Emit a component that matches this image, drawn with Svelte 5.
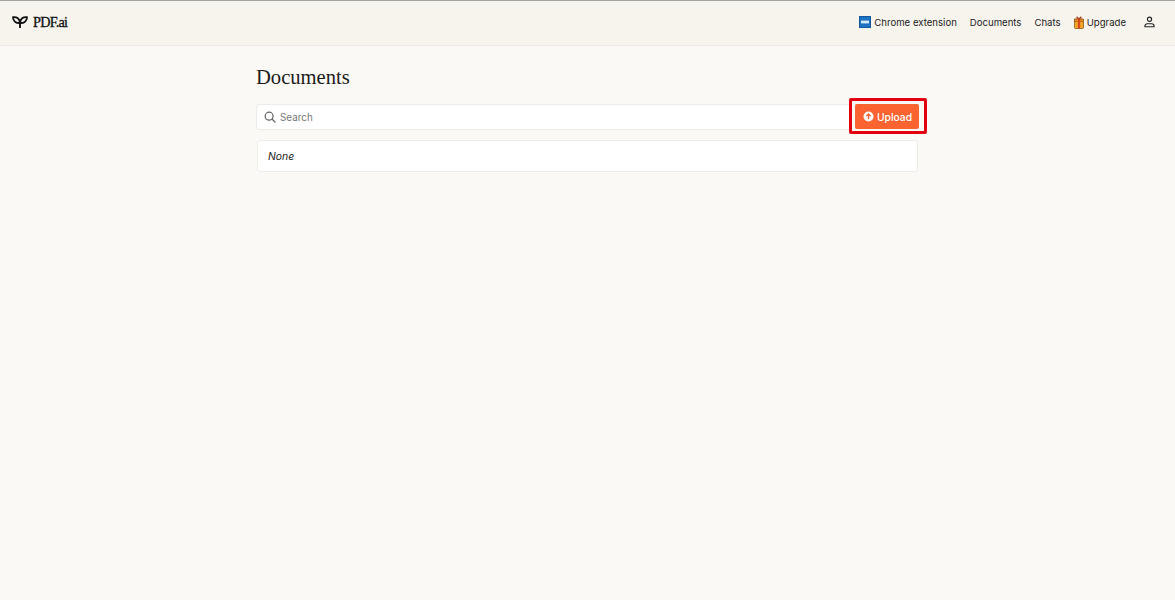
<script>
  const links = ['Documents', 'Chats'];
</script>

<div class="page">
  <header class="top">
    <a class="brand" href="#home">
      <svg class="sprout" viewBox="0 0 16 12" width="16" height="12" fill="none" stroke="#111" stroke-width="1.9" stroke-linecap="round" stroke-linejoin="round">
        <path d="M8 11.2V6.5" />
        <path d="M8 7C4.6 7.4 1.2 5.6 1 1.2 4.8.6 7.8 2.6 8 7Z" />
        <path d="M8 7C11.4 7.4 14.8 5.6 15 1.2 11.2.6 8.2 2.6 8 7Z" />
      </svg>
      <span>PDF.ai</span>
    </a>
    <nav class="nav">
      <a href="#ext" class="ext">
        <svg viewBox="0 0 12 12" width="12" height="12"><rect width="12" height="12" fill="#1d72c4"/><rect x=".5" y=".5" width="11" height="11" fill="none" stroke="#155a9e"/><rect x="2" y="4.6" width="8" height="2.8" fill="#d5e9f8"/></svg>
        Chrome extension
      </a>
      {#each links as l}
        <a href="#{l}">{l}</a>
      {/each}
      <a href="#up" class="ext">
        <svg viewBox="0 0 10 13" width="10" height="13"><rect x=".5" y="3" width="9" height="9.5" rx="1" fill="#f5a623" stroke="#7a4a14" stroke-width=".7"/><rect x=".5" y="3" width="9" height="2.4" fill="#f08a1d" stroke="#7a4a14" stroke-width=".5"/><rect x="3.9" y="3" width="2.2" height="9.5" fill="#d8481c"/><path d="M5 3 2.6.8M5 3 7.4.8" stroke="#a83a14" stroke-width="1.2" fill="none"/></svg>
        Upgrade
      </a>
      <a href="#me" class="me" aria-label="Account">
        <svg viewBox="0 0 12 12" width="11" height="12" fill="none" stroke="#222" stroke-width="1.2" stroke-linejoin="round"><circle cx="6" cy="3" r="2.3"/><path d="M1 11.2v-.8c0-1.6 1-2.5 2.6-2.5h4.8c1.6 0 2.6.9 2.6 2.5v.8Z"/></svg>
      </a>
    </nav>
  </header>

  <main class="main">
    <h1>Documents</h1>
    <div class="toolbar">
      <label class="search">
        <svg viewBox="0 0 14 14" width="12" height="12" fill="none" stroke="#666" stroke-width="1.5" stroke-linecap="round"><circle cx="6" cy="6" r="4.6"/><path d="M9.6 9.6 12.8 12.8"/></svg>
        <input placeholder="Search" />
      </label>
      <div class="mark">
        <button class="upload">
          <svg viewBox="0 0 12 12" width="11" height="11"><circle cx="6" cy="6" r="5.5" fill="#fff"/><path d="M6 9V3.4M3.6 5.6 6 3.2l2.4 2.4" stroke="#f9622f" stroke-width="1.5" fill="none"/></svg>
          Upload
        </button>
      </div>
    </div>
    <div class="list"><em>None</em></div>
  </main>
</div>

<style>
  :global(body) {
    margin: 0;
    background: #fbf9f5;
    font-family: Inter, "Liberation Sans", sans-serif;
    color: #222;
  }
  .page { min-height: 600px; background: #fbf9f5; }
  .top {
    box-sizing: border-box;
    height: 46px;
    border-top: 1px solid #a3a5a0;
    border-bottom: 1px solid #efece6;
    background: #f7f4ee;
    display: flex;
    align-items: center;
    justify-content: space-between;
    padding: 0 20px 2px 12px;
  }
  a { color: #222; text-decoration: none; }
  .brand {
    display: flex;
    align-items: center;
    gap: 5px;
    font-family: "Liberation Serif", serif;
    font-size: 14.2px;
    font-weight: 400;
    letter-spacing: -0.75px;
    -webkit-text-stroke: 0.3px #111;
    color: #111;
  }
  .nav {
    display: flex;
    align-items: center;
    gap: 13px;
    font-size: 9.6px;
  }
  .ext { display: flex; align-items: center; gap: 3px; }
  .me { display: flex; margin-left: 5px; }
  .main {
    width: 662px;
    margin-left: 256px;
  }
  h1 {
    font-family: "Liberation Serif", serif;
    font-weight: 400;
    font-size: 20.6px;
    line-height: 26px;
    color: #1b1b1b;
    margin: 18px 0 14px;
  }
  .toolbar { display: flex; align-items: center; height: 26px; }
  .search {
    flex: 1;
    box-sizing: border-box;
    height: 26px;
    display: flex;
    align-items: center;
    gap: 2px;
    padding-left: 7px;
    background: #fff;
    border: 1px solid #ecebe6;
    border-radius: 3px 0 0 3px;
  }
  input {
    border: 0;
    outline: 0;
    background: transparent;
    flex: 1;
    font: 9.9px Inter, "Liberation Sans", sans-serif;
  }
  input::placeholder { color: #777; opacity: 1; }
  .mark {
    box-sizing: border-box;
    width: 78px;
    height: 36px;
    margin: 0 -9px 2px -6px;
    padding: 3px 5px 2px 3px;
    border: 3px solid #e3000f;
    border-radius: 2px;
    background: #fbf9f5;
    position: relative;
  }
  .upload {
    width: 100%;
    height: 100%;
    box-sizing: border-box;
    padding: 0 0 0 1px;
    border: 0;
    border-radius: 2px;
    background: #fb6330;
    color: #fff;
    font: 500 10.3px Inter, "Liberation Sans", sans-serif;
    display: flex;
    align-items: center;
    justify-content: center;
    gap: 3px;
  }
  .list {
    box-sizing: border-box;
    height: 32px;
    margin: 10px 0 0 1px;
    padding: 1px 0 0 10px;
    display: flex;
    align-items: center;
    background: #fff;
    border: 1px solid #ecebe6;
    border-radius: 3px;
    font-size: 10.4px;
  }
</style>
